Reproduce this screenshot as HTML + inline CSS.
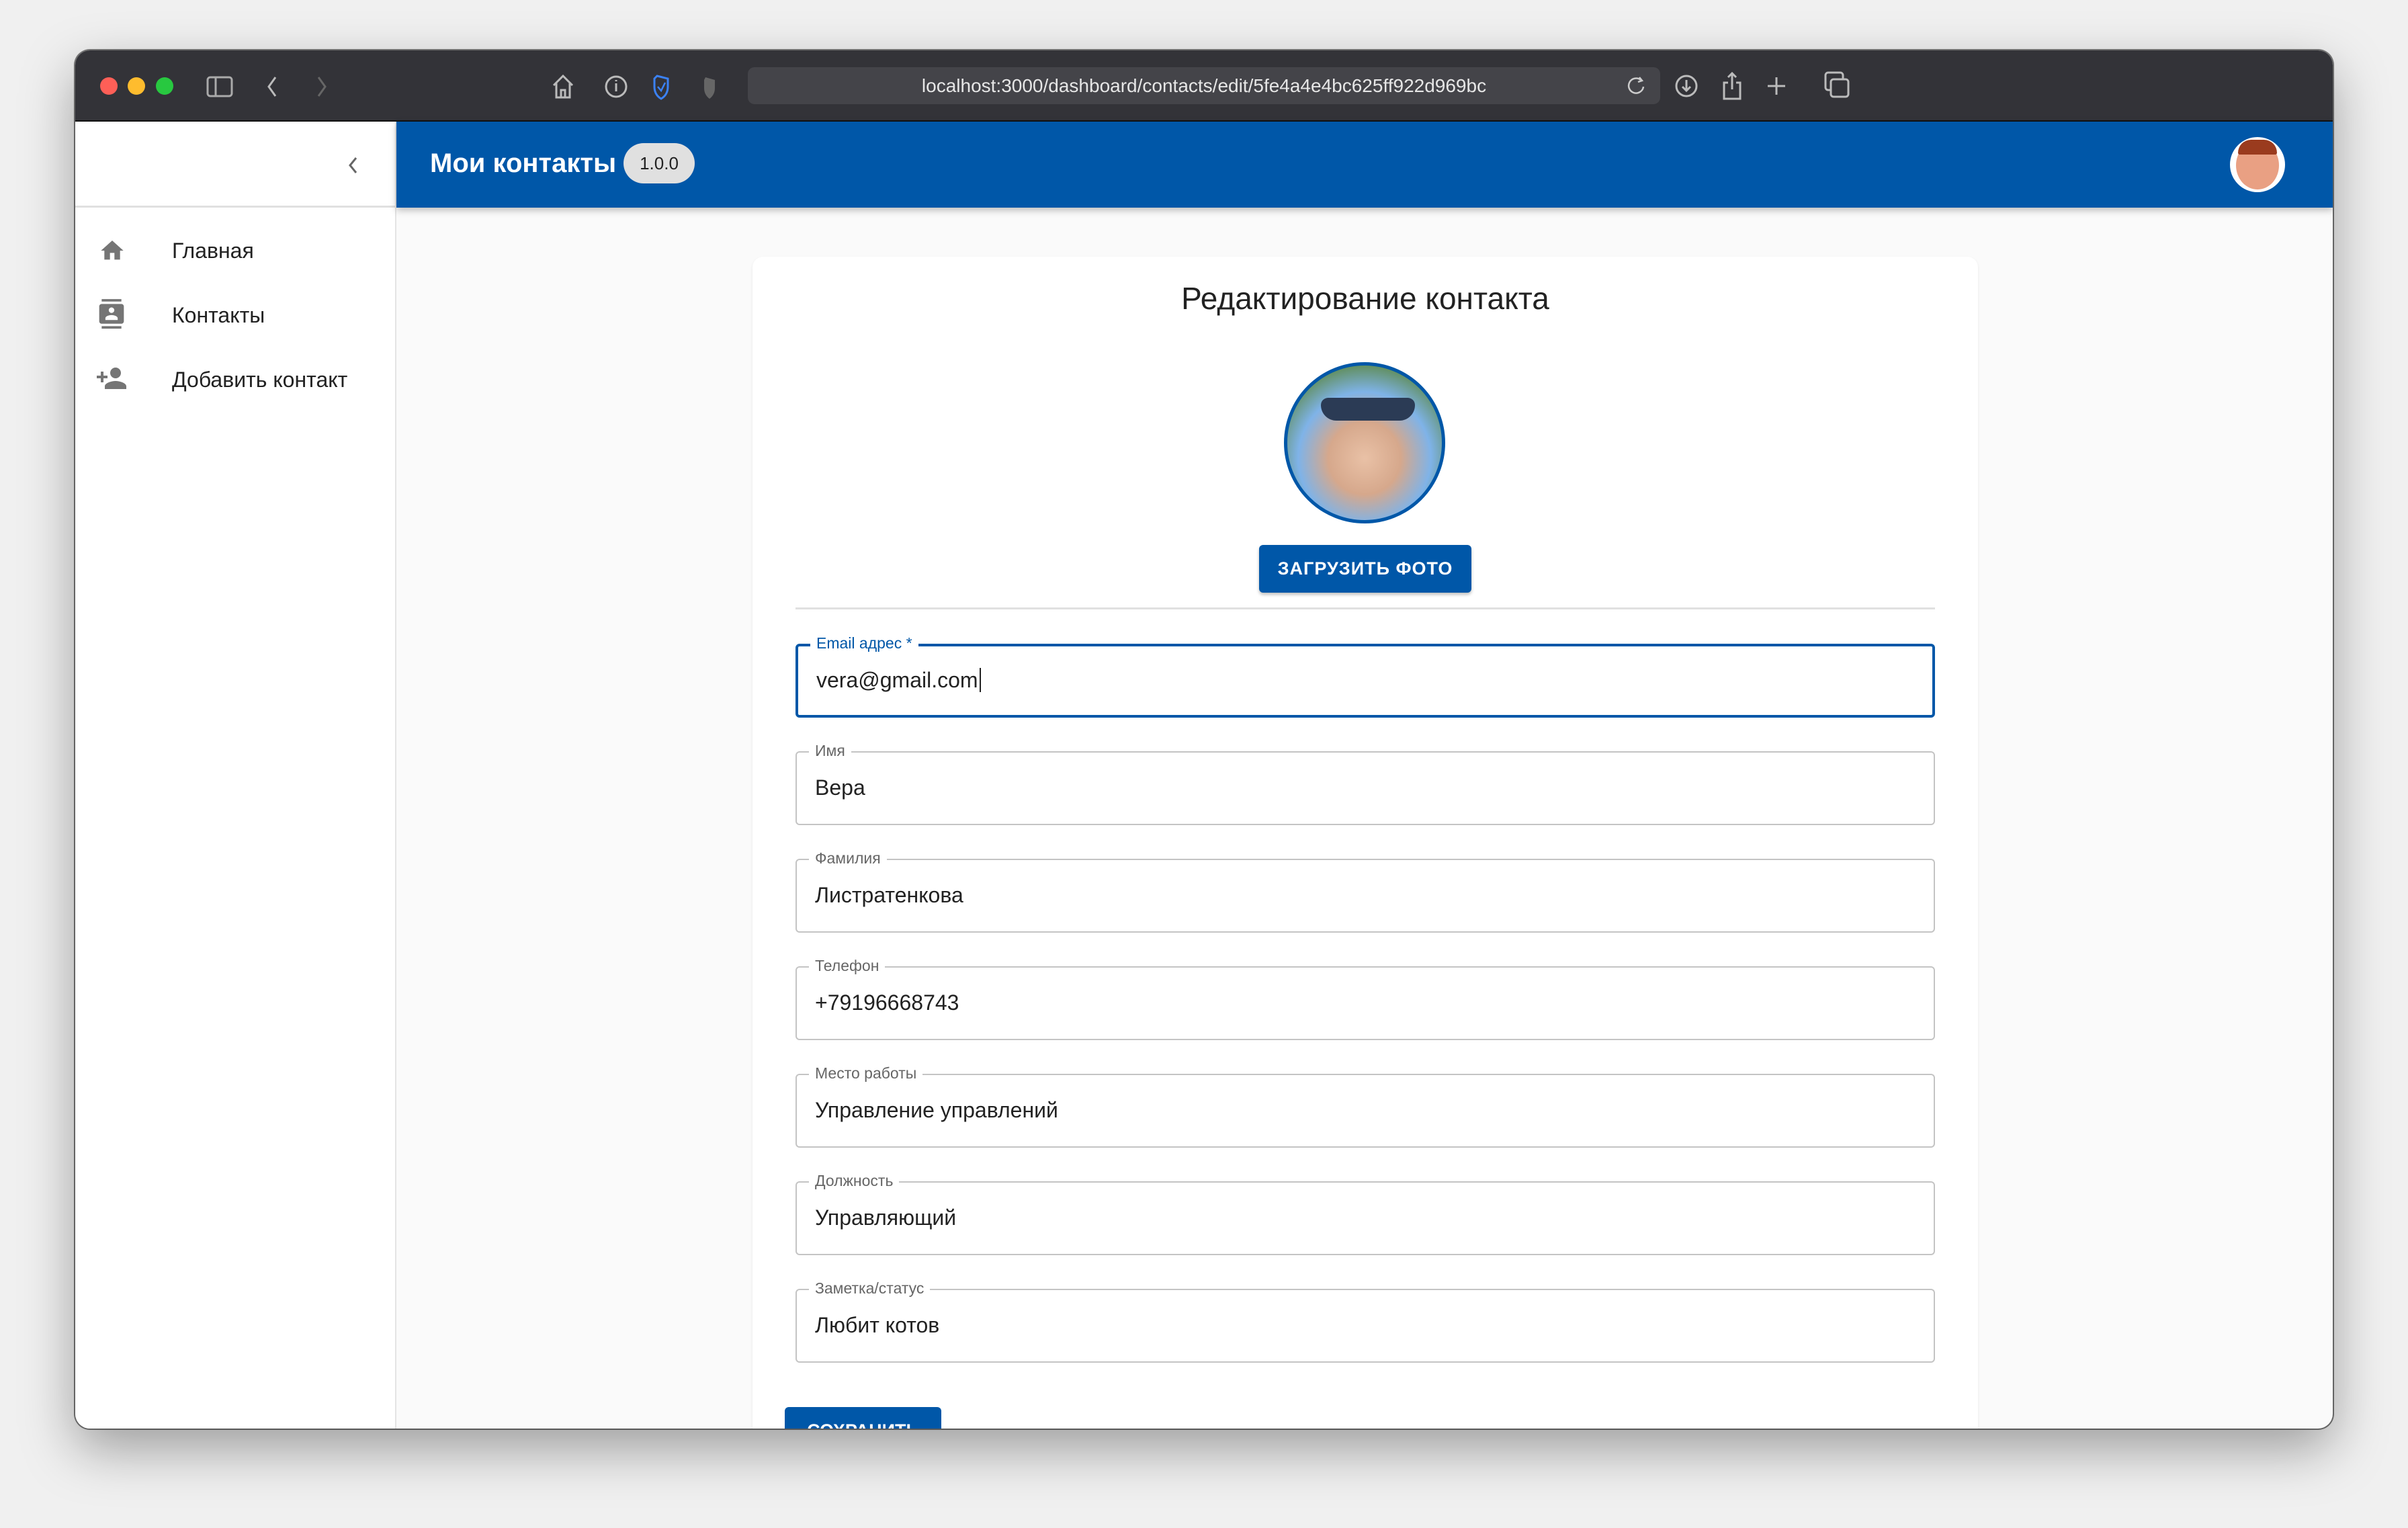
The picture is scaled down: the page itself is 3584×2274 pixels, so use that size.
<!DOCTYPE html>
<html><head><meta charset="utf-8"><style>
*{box-sizing:border-box;margin:0;padding:0}
body{width:3584px;height:2274px;background:#f0f0f0;position:relative;overflow:hidden;font-family:"Liberation Sans","DejaVu Sans",sans-serif}
.win{position:absolute;left:112px;top:75px;width:3360px;height:2051px;border-radius:22px;overflow:hidden;background:#fafafa;box-shadow:0 30px 80px rgba(0,0,0,.35),0 0 0 2px rgba(0,0,0,.5)}
.tb{position:absolute;left:0;top:0;width:100%;height:106px;background:#333338;border-bottom:2px solid #111}
.dot{position:absolute;top:40px;width:26px;height:26px;border-radius:50%}
.url{position:absolute;left:1001px;top:25px;width:1358px;height:55px;border-radius:10px;background:#444449;color:#e6e6e6;font-size:28px;text-align:center;line-height:55px}
.side{position:absolute;left:0;top:106px;width:478px;height:1945px;background:#fff;border-right:2px solid #e4e4e4}
.side .hd{height:128px;border-bottom:3px solid #e0e0e0}
.item{position:absolute;left:144px;font-size:32px;color:#222}
.bar{position:absolute;left:478px;top:106px;width:2882px;height:128px;background:#0057a8;box-shadow:0 4px 10px rgba(0,0,0,.25)}
.card{position:absolute;left:1008px;top:307px;width:1824px;height:1800px;background:#fff;border-radius:16px;box-shadow:0 2px 4px rgba(0,0,0,.08)}
.f{position:absolute;left:64px;width:1696px;height:110px;border:2px solid #c4c4c4;border-radius:6px}
.f .l{position:absolute;left:18px;top:-16px;background:#fff;padding:0 9px;font-size:23px;color:#666}
.f .v{position:absolute;left:27px;top:34px;font-size:32px;color:#222}
</style></head><body>
<div class="win">
 <div class="tb">
  <div class="dot" style="left:37px;background:#fe5f57"></div>
  <div class="dot" style="left:78px;background:#febc2e"></div>
  <div class="dot" style="left:120px;background:#28c840"></div>
  <svg style="position:absolute;left:195px;top:38px" width="40" height="32"><rect x="2" y="2" width="36" height="28" rx="4" fill="none" stroke="#aaa" stroke-width="3"/><line x1="14" y1="2" x2="14" y2="30" stroke="#aaa" stroke-width="3"/></svg>
  <svg style="position:absolute;left:280px;top:36px" width="100" height="36"><path d="M18 4 L8 18 L18 32" fill="none" stroke="#bbb" stroke-width="3"/><path d="M82 4 L92 18 L82 32" fill="none" stroke="#666" stroke-width="3"/></svg>
  <svg style="position:absolute;left:706px;top:32px" width="290" height="42"><path d="M6 20 L20 6 L34 20 M10 17 V38 H30 V17 M17 38 V27 H23 V38" fill="none" stroke="#bbb" stroke-width="3"/><circle cx="99" cy="22" r="15" fill="none" stroke="#bbb" stroke-width="3"/><path d="M99 17v12M99 12v2" stroke="#bbb" stroke-width="3"/><path d="M160 6 L176 10 L176 22 Q176 34 166 40 Q156 34 156 22 L156 10Z" fill="none" stroke="#3b82f6" stroke-width="3"/><path d="M161 22 l5 6 l6 -12" fill="none" stroke="#3b82f6" stroke-width="2.5"/><path d="M232 8 L246 12 L246 24 Q246 34 238 40 Q230 34 230 24 L230 12Z" fill="#666"/></svg>
  <div class="url">localhost:3000/dashboard/contacts/edit/5fe4a4e4bc625ff922d969bc</div>
  <svg style="position:absolute;left:2310px;top:38px" width="30" height="32"><path d="M20 6 A11 11 0 1 0 24 16" fill="none" stroke="#ccc" stroke-width="2.5"/><path d="M18 2 l4 5 l-6 2" fill="none" stroke="#ccc" stroke-width="2.5"/></svg>
  <svg style="position:absolute;left:2380px;top:30px" width="180" height="46"><circle cx="18" cy="23" r="15" fill="none" stroke="#bbb" stroke-width="3"/><path d="M18 14v16M12 24l6 6 6-6" fill="none" stroke="#bbb" stroke-width="3"/><path d="M80 18h-6v24h24v-24h-6M86 4v24M80 10l6-6 6 6" fill="none" stroke="#bbb" stroke-width="3"/><path d="M152 10v26M139 23h26" stroke="#bbb" stroke-width="3"/></svg>
  <svg style="position:absolute;left:2602px;top:30px" width="42" height="46"><rect x="3" y="3" width="26" height="26" rx="4" fill="none" stroke="#bbb" stroke-width="3"/><rect x="11" y="13" width="26" height="26" rx="4" fill="#333338" stroke="#bbb" stroke-width="3"/></svg>
 </div>
 <div class="side"><div class="hd"></div>
  <svg style="position:absolute;left:404px;top:50px" width="20" height="30"><path d="M14 4 L5 15 L14 26" fill="none" stroke="#666" stroke-width="3"/></svg>
  <svg style="position:absolute;left:34px;top:172px" width="42" height="40" viewBox="0 0 24 24"><path d="M10 20v-6h4v6h5v-8h3L12 3 2 12h3v8z" fill="#757575"/></svg>
  <div class="item" style="top:174px">Главная</div>
  <svg style="position:absolute;left:32px;top:262px" width="44" height="50" viewBox="0 1 24 23"><path d="M20 0H4v2h16V0zM4 24h16v-2H4v2zM20 4H4c-1.1 0-2 .9-2 2v12c0 1.1.9 2 2 2h16c1.1 0 2-.9 2-2V6c0-1.1-.9-2-2-2zm-8 2.75c1.24 0 2.25 1.01 2.25 2.25s-1.01 2.25-2.25 2.25S9.75 10.24 9.75 9 10.76 6.75 12 6.75zM17 17H7v-1.5c0-1.67 3.33-2.5 5-2.5s5 .83 5 2.5V17z" fill="#757575"/></svg>
  <div class="item" style="top:270px">Контакты</div>
  <svg style="position:absolute;left:30px;top:362px" width="48" height="40" viewBox="0 2 24 20"><path d="M15 12c2.21 0 4-1.790 4-4s-1.79-4-4-4-4 1.79-4 4 1.79 4 4 4zm-9-2V7H4v3H1v2h3v3h2v-3h3v-2H6zm9 4c-2.67 0-8 1.34-8 4v2h16v-2c0-2.66-5.33-4-8-4z" fill="#757575"/></svg>
  <div class="item" style="top:366px">Добавить контакт</div>
 </div>
 <div class="bar">
  <div style="position:absolute;left:50px;top:40px;color:#fff;font-size:40px;font-weight:bold">Мои контакты</div>
  <div style="position:absolute;left:338px;top:32px;width:106px;height:60px;border-radius:30px;background:#e0e0e0;color:#222;font-size:26px;text-align:center;line-height:60px">1.0.0</div>
  <div style="position:absolute;left:2729px;top:23px;width:82px;height:82px;border-radius:50%;background:#fff;overflow:hidden"><div style="position:absolute;left:9px;top:6px;width:64px;height:72px;border-radius:50%;background:#e9a083"></div><div style="position:absolute;left:12px;top:4px;width:58px;height:22px;border-radius:30px 30px 4px 4px;background:#9a3b1e"></div></div>
 </div>
 <div class="card">
  <div style="position:absolute;left:0;width:100%;top:35px;text-align:center;font-size:46px;color:#222">Редактирование контакта</div>
  <div style="position:absolute;left:791px;top:157px;width:240px;height:240px;border-radius:50%;border:5px solid #0057a8;overflow:hidden;background:radial-gradient(circle at 50% 60%,#e9c1a6 0,#d6a88c 30%,#7fb3e8 55%,#5d8a4e 80%)">
   <div style="position:absolute;left:50px;top:48px;width:140px;height:34px;background:#2b3b55;border-radius:14px 14px 30px 30px"></div></div>
  <div style="position:absolute;left:754px;top:429px;width:316px;height:71px;border-radius:6px;background:#0057a8;color:#fff;font-size:27px;font-weight:bold;letter-spacing:1px;text-align:center;line-height:71px;box-shadow:0 3px 5px rgba(0,0,0,.25)">ЗАГРУЗИТЬ ФОТО</div>
  <div style="position:absolute;left:64px;top:522px;width:1696px;height:3px;background:#e0e0e0"></div>
  <div class="f" style="top:576px;border:4px solid #0057a8"><div class="l" style="color:#0057a8;top:-18px">Email адрес *</div><div class="v" style="top:32px">vera@gmail.com<span style="border-left:2px solid #222;margin-left:2px"></span></div></div>
  <div class="f" style="top:736px"><div class="l">Имя</div><div class="v">Вера</div></div>
  <div class="f" style="top:896px"><div class="l">Фамилия</div><div class="v">Листратенкова</div></div>
  <div class="f" style="top:1056px"><div class="l">Телефон</div><div class="v">+79196668743</div></div>
  <div class="f" style="top:1216px"><div class="l">Место работы</div><div class="v">Управление управлений</div></div>
  <div class="f" style="top:1376px"><div class="l">Должность</div><div class="v">Управляющий</div></div>
  <div class="f" style="top:1536px"><div class="l">Заметка/статус</div><div class="v">Любит котов</div></div>
  <div style="position:absolute;left:48px;top:1712px;width:233px;height:71px;border-radius:6px;background:#0057a8;color:#fff;font-size:27px;font-weight:bold;text-align:center;line-height:71px">СОХРАНИТЬ</div>
 </div>
</div>
</body></html>
